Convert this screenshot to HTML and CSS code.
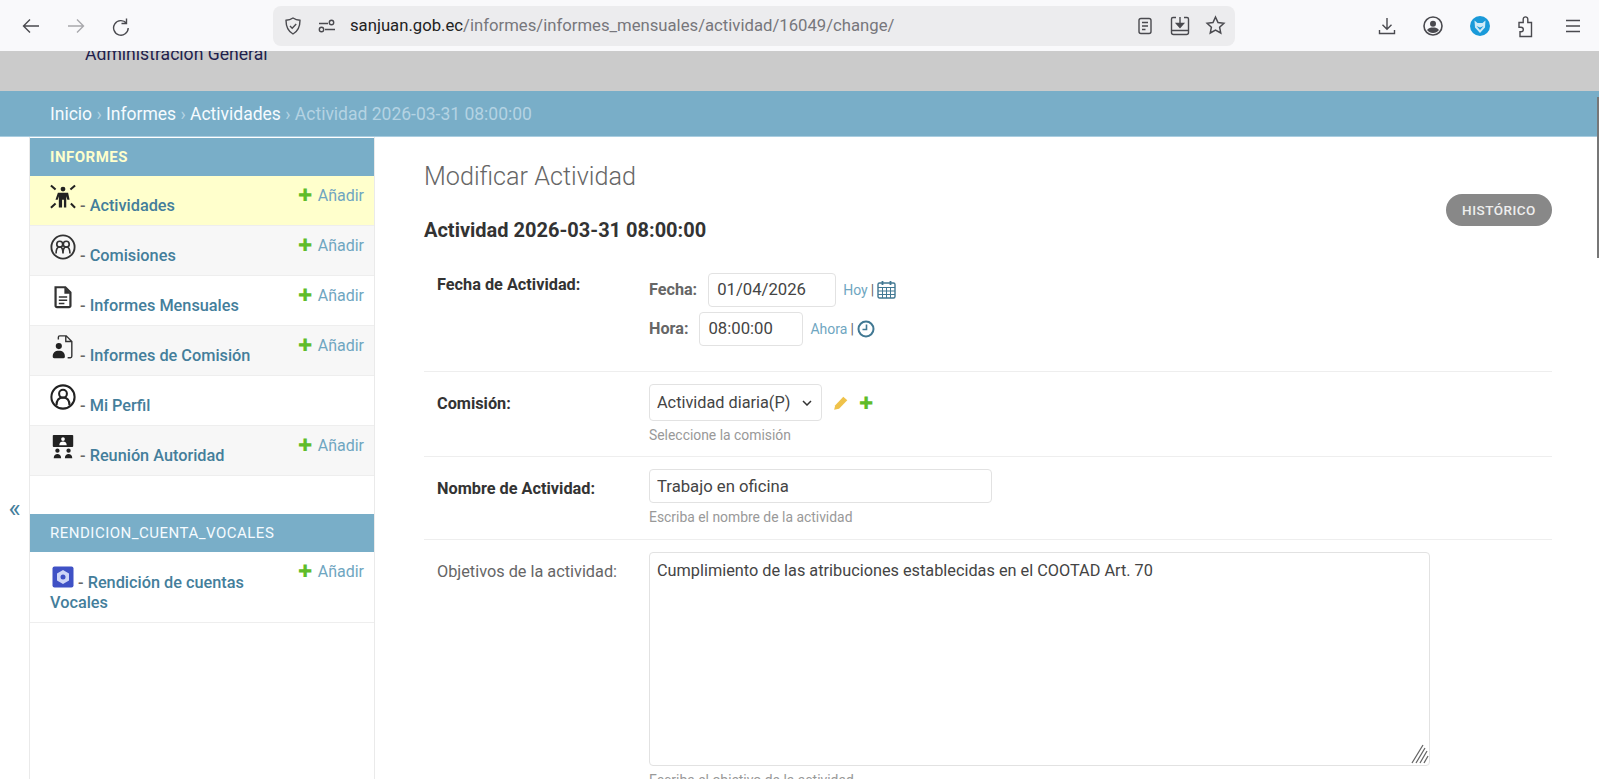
FILE: index.html
```html
<!DOCTYPE html>
<html lang="es">
<head>
    <meta charset="UTF-8">
    <meta name="viewport" content="width=device-width, initial-scale=1.0">
    <title>Modificar Actividad</title>
    <link rel="stylesheet" href="styles.css">
</head>
<body>
    <div class="toolbar">
        <div class="nav-buttons">
            <span class="tool"><svg width="20" height="20" viewBox="0 0 20 20" class="stroke thin"><path d="M18 10H2.500M9 3.500 2.500 10 9 16.500"/></svg></span>
            <span class="tool"><svg width="20" height="20" viewBox="0 0 20 20" class="stroke faded"><path d="M2 10h15.500M11 3.500l6.500 6.500-6.500 6.500"/></svg></span>
            <span class="tool"><svg width="20" height="20" viewBox="0 0 20 20" class="stroke thin"><path d="M15.500 2.500v5h-5M15.500 7.200A7.300 7.300 0 1 0 17.200 12"/></svg></span>
        </div>
        <div class="urlbar">
            <span class="url-icon"><svg width="20" height="20" viewBox="0 0 20 20" class="stroke thin"><path d="M10 2c2 1.400 4.400 2.200 7 2.300 0 6.400-2 11-7 13.700C5 15.300 3 10.700 3 4.300 5.600 4.200 8 3.400 10 2z"/><path d="M7 10l2.200 2.200L13.200 8"/></svg></span>
            <span class="url-icon"><svg width="20" height="20" viewBox="0 0 20 20" class="stroke thin"><path d="M2 7.500h9M8 13.500h10"/><circle cx="14.500" cy="6.500" r="2.200"/><circle cx="4.500" cy="13.500" r="2.200"/></svg></span>
            <span class="url-text"><b>sanjuan.gob.ec</b>/informes/informes_mensuales/actividad/16049/change/</span>
            <span class="url-actions">
                <svg width="20" height="20" viewBox="0 0 20 20" class="stroke thin"><rect x="4" y="2.500" width="12" height="15" rx="2"/><path d="M7 6.500h6M7 10h6M7 13.500h3.500"/></svg>
                <svg width="22" height="22" viewBox="0 0 22 22" class="stroke thin"><path d="M7 2.500H4a1.500 1.500 0 0 0-1.500 1.500v13.500a2 2 0 0 0 2 2h13a2 2 0 0 0 2-2V4A1.500 1.500 0 0 0 18 2.500h-3M2.500 15.500h17M11 2v9.500"/><path d="M7.500 8.500 11 12.500l3.500-4z" fill="#4a4a4f"/></svg>
                <svg width="21" height="21" viewBox="0 0 20 20" class="stroke thin"><path d="M10 2l2.400 5.100 5.600.7-4.100 3.800 1.100 5.500-5-2.800-5 2.800 1.100-5.500L2 7.800l5.600-.7z"/></svg>
            </span>
        </div>
        <div class="browser-tools">
            <span class="tool wide"><svg width="20" height="20" viewBox="0 0 20 20" class="stroke thin"><path d="M10 2v11M5.500 8.800 10 13.300l4.500-4.500M2.500 14v3.500h15V14"/></svg></span>
            <span class="tool wide"><svg width="22" height="22" viewBox="0 0 22 22"><circle cx="11" cy="11" r="9" fill="none" stroke="#4a4a4f" stroke-width="1.600"/><circle cx="11" cy="8.800" r="3" fill="#4a4a4f"/><path d="M5 15c1.500-2 3.500-2.500 6-2.500s4.500.5 6 2.500c-1.500 2-3.500 3-6 3s-4.500-1-6-3z" fill="#4a4a4f"/></svg></span>
            <span class="tool wide"><svg width="22" height="22" viewBox="0 0 22 22"><circle cx="11" cy="11" r="10" fill="#1a9ad9"/><path d="M5.500 5.500 8.500 8h5l3-2.500-.5 7L11 18 6 12.500z" fill="#cfeaf7"/><path d="M7.500 11l3.500 1.500 3.500-1.500-3.500 4z" fill="#1a9ad9"/></svg></span>
            <span class="tool wide"><svg width="22" height="24" viewBox="0 0 22 24" class="stroke thin"><path d="M5 22.500h11.500V8.500h-3.700V5.200a2.300 2.300 0 1 0-4.600 0v3.300H4v4.700h2a2.300 2.300 0 0 1 0 4.600H5z"/></svg></span>
            <span class="tool wide"><svg width="18" height="18" viewBox="0 0 18 18" class="stroke thin"><path d="M2 3.500h14M2 9h14M2 14.500h14"/></svg></span>
        </div>
    </div>

    <div class="site-band">
        <div class="site-name">Administración General</div>
    </div>

    <div class="breadcrumbs">
        <a href="#">Inicio</a> › <a href="#">Informes</a> › <a href="#">Actividades</a> › Actividad 2026-03-31 08:00:00
    </div>

    <div class="page">
        <div class="sidebar-toggle"><span>«</span></div>

        <div class="sidebar">
            <div class="app-caption current">INFORMES</div>

            <div class="model-row selected">
                <div class="model-name">
                    <svg class="model-icon" viewBox="0 0 28 28"><g fill="#222"><circle cx="14" cy="5.500" r="2.600"/><path d="M8.500 9.500h11l1.600 7.500h-2.400l-1.200-3.800v12H15V17h-2v8.200H9.500v-12L8.300 17H5.900z"/></g><path d="M1 1.500l5 4.500M27 1.500l-5 4.500M1 25.500l5-4.500M27 25.500l-4.500-4.500" stroke="#222" stroke-width="2.200" fill="none"/></svg>
                    - <a href="#">Actividades</a>
                </div>
                <a class="add-link" href="#"><span class="plus">✚</span> Añadir</a>
            </div>
            <div class="model-row shaded">
                <div class="model-name">
                    <svg class="model-icon" viewBox="0 0 28 28"><circle cx="14" cy="14" r="12.500" fill="none" stroke="#333" stroke-width="2"/><g fill="none" stroke="#333" stroke-width="1.800"><circle cx="10.500" cy="11" r="3.200"/><circle cx="17.500" cy="11" r="3.200"/><path d="M6.500 21c0-5 1.500-7 4-7s3.500 2 3.500 7c0-5 1-7 3.500-7s4 2 4 7"/></g></svg>
                    - <a href="#">Comisiones</a>
                </div>
                <a class="add-link" href="#"><span class="plus">✚</span> Añadir</a>
            </div>
            <div class="model-row">
                <div class="model-name">
                    <svg class="model-icon" viewBox="0 0 28 28"><path d="M6 3.500h10.500l5.500 5.500v14.500a1.500 1.500 0 0 1-1.500 1.500h-13A1.500 1.500 0 0 1 6 23.500z" fill="none" stroke="#333" stroke-width="2.400"/><path d="M15.500 3.500v7h6.500" fill="#333"/><path d="M9.500 14h9M9.500 17.500h9M9.500 21h6" stroke="#333" stroke-width="1.800"/></svg>
                    - <a href="#">Informes Mensuales</a>
                </div>
                <a class="add-link" href="#"><span class="plus">✚</span> Añadir</a>
            </div>
            <div class="model-row shaded">
                <div class="model-name">
                    <svg class="model-icon" viewBox="0 0 28 28"><path d="M9 6V3.500A1.500 1.500 0 0 1 10.500 2h7l6 6v16a1.500 1.500 0 0 1-1.500 1.500h-3M17 2v6h6.500" fill="none" stroke="#333" stroke-width="1.500"/><circle cx="9.500" cy="13" r="3.300" fill="#222"/><path d="M3 25c-.5-5 2.500-7 6.500-7s7 2 6.500 7a2 2 0 0 1-2 1H5a2 2 0 0 1-2-1z" fill="#222"/></svg>
                    - <a href="#">Informes de Comisión</a>
                </div>
                <a class="add-link" href="#"><span class="plus">✚</span> Añadir</a>
            </div>
            <div class="model-row">
                <div class="model-name">
                    <svg class="model-icon" viewBox="0 0 28 28"><circle cx="14" cy="14" r="12.500" fill="none" stroke="#222" stroke-width="2.200"/><circle cx="14" cy="10.500" r="4.200" fill="none" stroke="#222" stroke-width="2.200"/><path d="M7 23c0-6 3-8.500 7-8.500s7 2.500 7 8.500" fill="none" stroke="#222" stroke-width="2.200"/></svg>
                    - <a href="#">Mi Perfil</a>
                </div>
            </div>
            <div class="model-row shaded">
                <div class="model-name">
                    <svg class="model-icon" viewBox="0 0 28 28"><rect x="3" y="1" width="22" height="13" rx="1" fill="#222"/><circle cx="14" cy="5.500" r="2" fill="#fff"/><path d="M10 12c0-3 2-4 4-4s4 1 4 4z" fill="#fff"/><g fill="#222"><circle cx="8" cy="18" r="2.300"/><circle cx="20" cy="18" r="2.300"/><path d="M4 26c0-3 2-4.500 4-4.500s4 1.500 4 4.500zM16 26c0-3 2-4.500 4-4.500s4 1.500 4 4.500z"/></g></svg>
                    - <a href="#">Reunión Autoridad</a>
                </div>
                <a class="add-link" href="#"><span class="plus">✚</span> Añadir</a>
            </div>

            <div class="app-caption second">RENDICION_CUENTA_VOCALES</div>

            <div class="model-row tall">
                <div class="model-name">
                    <svg class="model-icon square" viewBox="0 0 22 22"><rect x="0.500" y="0.500" width="21" height="21" rx="2" fill="#3f51c5"/><path d="M11 4l6 3.500v7L11 18l-6-3.500v-7z" fill="#cfd6f7"/><circle cx="11" cy="11" r="2.500" fill="#3f51c5"/></svg>
                    - <a href="#">Rendición de cuentas</a><br><a href="#">Vocales</a>
                </div>
                <a class="add-link" href="#"><span class="plus">✚</span> Añadir</a>
            </div>
        </div>

        <div class="content">
            <h1>Modificar Actividad</h1>

            <div class="object-head">
                <h2>Actividad 2026-03-31 08:00:00</h2>
                <a class="history-btn" href="#">HISTÓRICO</a>
            </div>

            <div class="form-row date-row">
                <label class="field-label required">Fecha de Actividad:</label>
                <div class="field">
                    <div class="date-line">
                        <span class="sub-label">Fecha:</span>
                        <input class="text-input date-input" type="text" value="01/04/2026">
                        <span class="shortcut"><a href="#">Hoy</a> | <svg width="19" height="19" viewBox="0 0 19 19"><rect x="1" y="3" width="17" height="15" rx="1.500" fill="none" stroke="#417893" stroke-width="1.400"/><path d="M1 7.500h17M1 11h17M1 14.500h17M5.500 7.500V18M9.500 7.500V18M13.500 7.500V18" stroke="#417893"/><path d="M5.500 1v4M13.500 1v4" stroke="#417893" stroke-width="1.800"/></svg></span>
                    </div>
                    <div class="date-line">
                        <span class="sub-label">Hora:</span>
                        <input class="text-input time-input" type="text" value="08:00:00">
                        <span class="shortcut"><a href="#">Ahora</a> | <svg width="18" height="18" viewBox="0 0 18 18"><circle cx="9" cy="9" r="7.500" fill="none" stroke="#417893" stroke-width="2"/><path d="M9.500 4.500v5H5.500" fill="none" stroke="#417893" stroke-width="1.600"/></svg></span>
                    </div>
                </div>
            </div>

            <div class="form-row comision-row">
                <label class="field-label required">Comisión:</label>
                <div class="field">
                    <div class="select-line">
                        <select class="select-input"><option>Actividad diaria(P)</option></select>
                        <svg width="16" height="16" viewBox="0 0 14 14"><path d="M1 13l1-4 7-7.500 3.500 3.200-7.200 7.300z" fill="#efc24a"/></svg>
                        <span class="plus">✚</span>
                    </div>
                    <div class="help">Seleccione la comisión</div>
                </div>
            </div>

            <div class="form-row">
                <label class="field-label required">Nombre de Actividad:</label>
                <div class="field">
                    <input class="text-input name-input" type="text" value="Trabajo en oficina">
                    <div class="help">Escriba el nombre de la actividad</div>
                </div>
            </div>

            <div class="form-row last">
                <label class="field-label">Objetivos de la actividad:</label>
                <div class="field">
                    <div class="area-wrap">
                        <textarea class="text-area">Cumplimiento de las atribuciones establecidas en el COOTAD Art. 70</textarea>
                        <svg class="resize-grip" width="18" height="20" viewBox="0 0 18 20"><path d="M1 19 12 1M5 19 14 4M9 19l7-12M13 19l4-7" stroke="#666" stroke-width="1.300" fill="none"/></svg>
                    </div>
                    <div class="help">Escriba el objetivo de la actividad</div>
                </div>
            </div>
        </div>
    </div>

    <div class="scroll-thumb"></div>
</body>
</html>
```

FILE: styles.css
```css
* {
    margin: 0;
    padding: 0;
    box-sizing: border-box;
    font-family: Roboto, "Liberation Sans", sans-serif;
}

html, body {
    height: 779px;
    overflow: hidden;
    background: white;
}

a {
    text-decoration: none;
}

.stroke {
    fill: none;
    stroke: #4a4a4f;
    stroke-width: 1.8;
}

.stroke.thin {
    stroke-width: 1.4;
}

.stroke.faded {
    stroke: #a8a8ac;
    stroke-width: 1.4;
}

/* browser chrome */
.toolbar {
    position: relative;
    z-index: 2;
    display: flex;
    align-items: center;
    height: 51px;
    background: #f9f9fb;
}

.nav-buttons {
    display: flex;
    padding-left: 8px;
    width: 273px;
}

.tool {
    display: flex;
    align-items: center;
    justify-content: center;
    width: 45px;
}

.tool.wide {
    width: 46.500px;
}

.urlbar {
    display: flex;
    align-items: center;
    width: 962px;
    height: 40px;
    padding-left: 10px;
    background: #ececee;
    border-radius: 8px;
}

.url-icon {
    display: flex;
    width: 34px;
}

.url-text {
    margin-left: -1px;
    font-size: 16.700px;
    color: #77777c;
}

.url-text b {
    font-weight: 400;
    color: #222;
}

.url-actions {
    display: flex;
    align-items: center;
    gap: 14px;
    margin-left: auto;
    padding-right: 9px;
}

.browser-tools {
    display: flex;
    margin-left: auto;
    padding-right: 3px;
}

/* site header */
.site-band {
    display: flow-root;
    height: 40px;
    background: #cbcbcb;
    padding-left: 85px;
}

.site-name {
    margin-top: -7px;
    font-size: 17.600px;
    color: #1f1f4d;
}

.breadcrumbs {
    height: 46px;
    line-height: 46px;
    padding-left: 50px;
    background: #79aec8;
    border-bottom: 1px solid #a9cde0;
    font-size: 17.500px;
    color: #b4d3e3;
}

.breadcrumbs a {
    color: #f5fbff;
}

.page {
    display: flex;
    height: 642px;
}

/* sidebar */
.sidebar-toggle {
    display: flex;
    align-items: center;
    justify-content: center;
    width: 30px;
    height: 100%;
    padding-top: 100px;
    font-size: 26px;
    color: #447e9b;
    border-right: 1px solid #eaeaea;
}

.sidebar {
    width: 345px;
    padding-top: 1px;
    border-right: 1px solid #eaeaea;
}

.app-caption {
    height: 38px;
    line-height: 38px;
    padding-left: 20px;
    background: #79aec8;
    font-size: 15px;
    letter-spacing: 0.5px;
    color: #f5fbff;
}

.app-caption.current {
    color: #ffffcc;
    font-weight: 700;
}

.app-caption.second {
    margin-top: 38px;
}

.model-row {
    display: flex;
    justify-content: space-between;
    align-items: flex-start;
    height: 50px;
    padding: 9px 10px 0 20px;
    border-bottom: 1px solid #eeeeee;
}

.model-row.selected {
    background: #ffffcc;
}

.model-row.shaded {
    background: #f7f7f7;
}

.model-row.tall {
    height: 71px;
}

.model-name {
    width: 232px;
    margin-top: -2px;
    font-size: 16.300px;
    line-height: 20px;
    font-weight: 500;
    color: #666;
}

.tall .model-name {
    margin-top: 5px;
}

.model-name a {
    color: #447e9b;
}

.model-icon {
    width: 26px;
    height: 28px;
    vertical-align: 0;
}

.model-icon.square {
    width: 22px;
    height: 22px;
    margin-left: 2px;
}

.add-link {
    font-size: 16px;
    line-height: 20px;
    color: #6fa6c1;
    white-space: nowrap;
}

.plus {
    margin-right: 2px;
    font-size: 17px;
    color: #5fbc2a;
}

/* form */
.content {
    flex: 1;
    padding: 26px 47px 0 49px;
}

h1 {
    font-size: 25.200px;
    line-height: 28px;
    font-weight: 300;
    color: #666;
}

.object-head {
    display: flex;
    justify-content: space-between;
    align-items: flex-start;
    margin-top: 3px;
    height: 58px;
}

h2 {
    padding-top: 24px;
    font-size: 20px;
    line-height: 24px;
    font-weight: 700;
    color: #333;
}

.history-btn {
    width: 106px;
    height: 32px;
    line-height: 32px;
    text-align: center;
    background: #888;
    border-radius: 16px;
    font-size: 13.500px;
    font-weight: 500;
    letter-spacing: 0.5px;
    color: #eee;
}

.form-row {
    display: flex;
    padding: 12px 12px 0 13px;
    border-bottom: 1px solid #eeeeee;
    height: 83px;
}

.form-row.date-row {
    height: 120px;
    padding-top: 20px;
}

.form-row.comision-row {
    height: 85px;
}

.form-row.last {
    height: auto;
    border-bottom: none;
}

.field-label {
    width: 212px;
    padding-top: 10px;
    font-size: 16.300px;
    line-height: 20px;
    color: #666;
}

.date-row .field-label {
    padding-top: 3px;
}

.field-label.required {
    font-weight: 700;
    color: #333;
}

.date-line {
    display: flex;
    align-items: center;
    gap: 11px;
    height: 35px;
    margin-bottom: 4px;
}

.sub-label {
    font-size: 16.200px;
    font-weight: 700;
    color: #666;
}

.text-input, .select-input, .text-area {
    border: 1px solid #e2e2e2;
    border-radius: 4px;
    background: white;
    font-size: 16.700px;
    color: #444;
    outline: none;
}

.text-input {
    padding: 0 8px;
    height: 34px;
}

.date-input {
    width: 128px;
}

.time-input {
    width: 104px;
}

.name-input {
    width: 343px;
    display: block;
    padding: 0 7px;
}

.shortcut {
    display: flex;
    align-items: center;
    gap: 3px;
    margin-left: -4px;
    font-size: 14px;
    color: #666;
}

.shortcut a {
    color: #6fa6c1;
}

.select-line {
    display: flex;
    align-items: center;
    gap: 11px;
}

.select-input {
    appearance: none;
    width: 173px;
    height: 37px;
    padding-left: 7px;
    font-size: 16.300px;
    background: white url("data:image/svg+xml,%3Csvg xmlns='http://www.w3.org/2000/svg' width='10' height='6'%3E%3Cpath d='M1 1l4 4 4-4' fill='none' stroke='%23333' stroke-width='1.500'/%3E%3C/svg%3E") no-repeat right 9px center;
}

.select-line .plus {
    margin: 0 0 0 -1px;
}

.help {
    margin-top: 6px;
    font-size: 13.900px;
    line-height: 16px;
    color: #999;
}

.area-wrap {
    position: relative;
    width: 781px;
    height: 214px;
}

.text-area {
    display: block;
    width: 100%;
    height: 100%;
    padding: 8px 7px;
    font-size: 16.300px;
    line-height: 20px;
    resize: none;
}

.resize-grip {
    position: absolute;
    right: 1px;
    bottom: 2px;
}

.scroll-thumb {
    position: absolute;
    top: 97px;
    right: 0;
    width: 2px;
    height: 161px;
    background: #777;
}
```
